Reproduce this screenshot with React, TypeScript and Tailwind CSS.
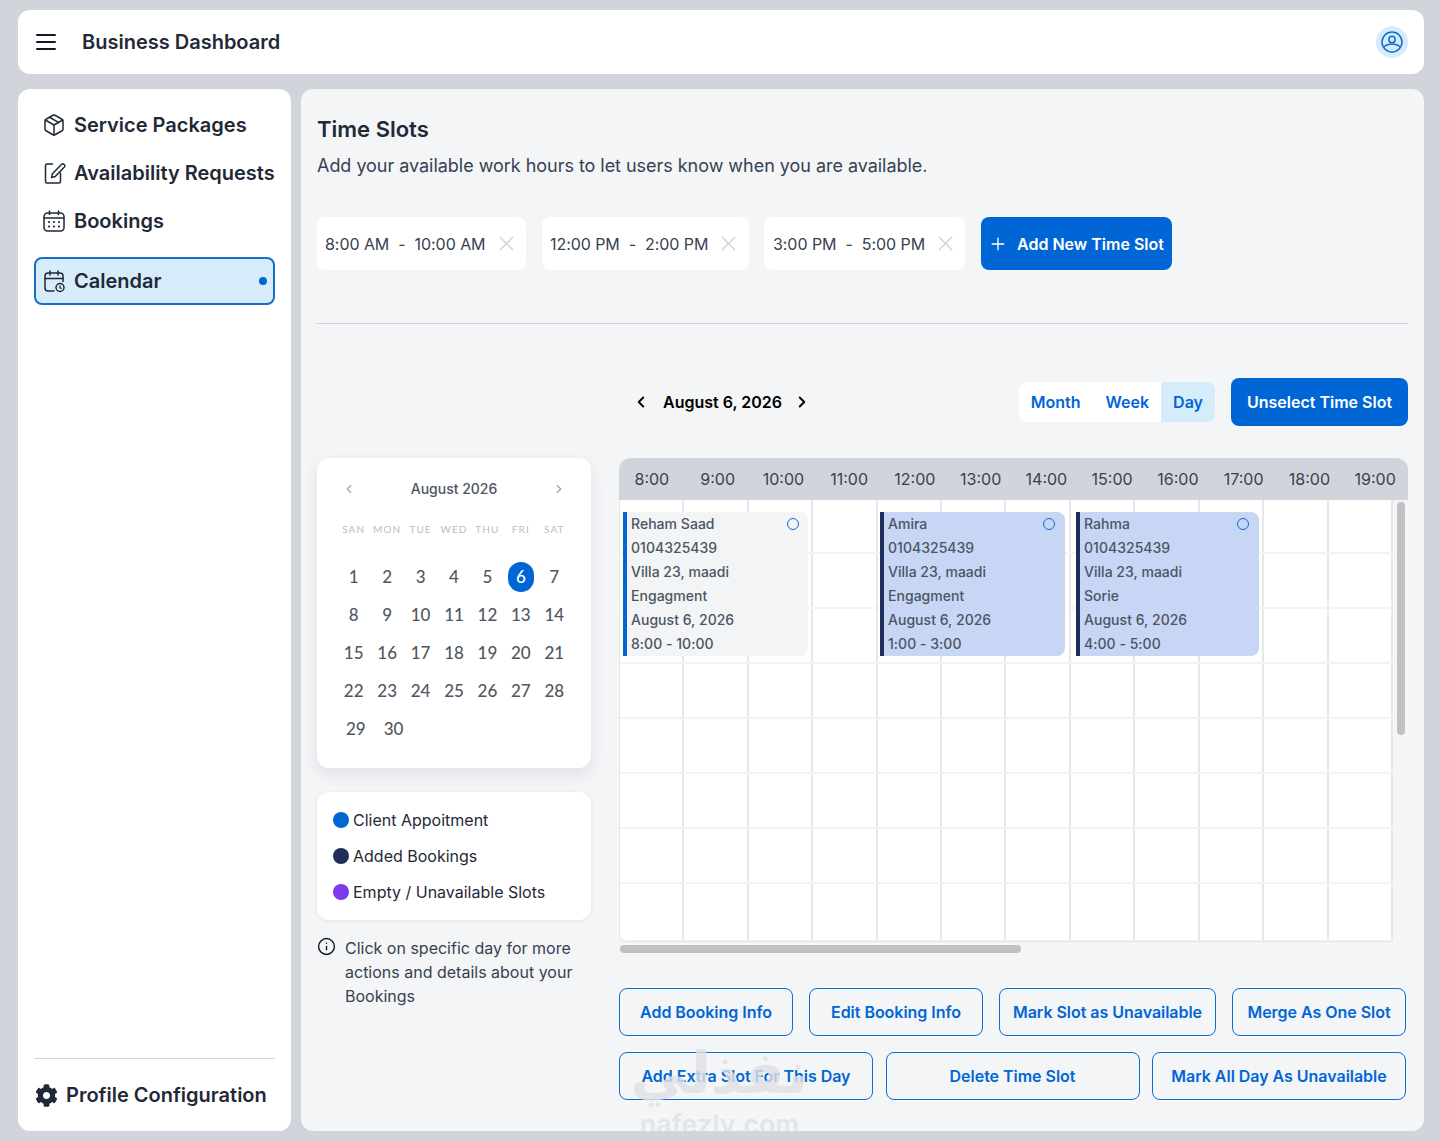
import React from "react";
import { Package, Plus, X, ChevronLeft, ChevronRight, Info } from "lucide-react";
import { FaCog } from "react-icons/fa";

const Inter = "[font-family:Inter,'Noto_Sans',sans-serif]";

function MenuIcon() {
  return (
    <svg width="20" height="16" viewBox="0 0 20 16" fill="none" stroke="#111827" strokeWidth="2" strokeLinecap="round" className="shrink-0">
      <path d="M1 1h18M1 8h18M1 15h18" />
    </svg>
  );
}

function PenIcon() {
  return (
    <svg width="24" height="24" viewBox="0 0 24 24" fill="none" stroke="currentColor" strokeWidth="1.500" strokeLinecap="round" strokeLinejoin="round" className="shrink-0">
      <path d="M10.500 3H5a1.500 1.500 0 0 0-1.500 1.500v16A1.500 1.500 0 0 0 5 22h12a1.500 1.500 0 0 0 1.500-1.500V12" />
      <path d="M9.500 16.500l.9-3.800 9-9.200a1.900 1.900 0 0 1 2.800 2.700l-9 9.300z" />
    </svg>
  );
}

function BookingsIcon() {
  return (
    <svg width="24" height="24" viewBox="0 0 24 24" fill="none" stroke="currentColor" strokeWidth="1.500" strokeLinecap="round" className="shrink-0">
      <rect x="2" y="4" width="20" height="18" rx="3.500" />
      <path d="M2 9h20M7.500 2v3.500M16.500 2v3.500" />
      <path d="M7 13h.01M12 13h.01M17 13h.01M7 17.500h.01M12 17.500h.01M17 17.500h.01" strokeWidth="2.200" />
    </svg>
  );
}

function CalendarClockIcon() {
  return (
    <svg width="24" height="24" viewBox="0 0 24 24" fill="none" stroke="currentColor" strokeWidth="1.500" strokeLinecap="round" strokeLinejoin="round" className="shrink-0">
      <path d="M21 12.500V7a3 3 0 0 0-3-3H6a3 3 0 0 0-3 3v12a3 3 0 0 0 3 3h6" />
      <path d="M3 9.500h18M8 2v4M16 2v4" />
      <circle cx="18" cy="18.500" r="4" />
      <path d="M18 16.800v1.900l1.200.7" strokeWidth="1.200" />
    </svg>
  );
}

function UserIcon() {
  return (
    <svg width="24" height="24" viewBox="0 0 24 24" fill="none" stroke="#0f6cd0" strokeWidth="1.500">
      <circle cx="12" cy="12" r="10" />
      <circle cx="12" cy="9.500" r="3.200" />
      <path d="M4 17c2-2.200 4.700-3 8-3s6 .8 8 3" />
    </svg>
  );
}

function NavItem({ icon, label }: { icon: React.ReactNode; label: string }) {
  return (
    <div className="flex items-center h-12 pl-2 gap-2 text-[#1f2937]">
      <div className="w-6 flex justify-center shrink-0">{icon}</div>
      <span className="text-[20px] font-semibold whitespace-nowrap">{label}</span>
    </div>
  );
}

function Chip({ from, to, width }: { from: string; to: string; width: string }) {
  return (
    <div className={`h-[53px] bg-white rounded-lg flex items-center pl-2 text-[16px] tracking-[-0.06px] text-[#374151] ${width}`}>
      <span className="whitespace-pre">{from}</span>
      <span className="mx-[9px]">-</span>
      <span className="whitespace-pre">{to}</span>
      <X size={25} strokeWidth={1.2} className="text-[#cdd0d5] ml-[8px]" />
    </div>
  );
}

const days = ["SAN", "MON", "TUE", "WED", "THU", "FRI", "SAT"];
const weeks = [
  [1, 2, 3, 4, 5, 6, 7],
  [8, 9, 10, 11, 12, 13, 14],
  [15, 16, 17, 18, 19, 20, 21],
  [22, 23, 24, 25, 26, 27, 28],
];

function MiniCalendar() {
  return (
    <div className="h-[310px] bg-white rounded-xl shadow-[0_6px_16px_rgba(17,24,39,0.09)] px-[20px] pt-[21px]">
      <div className="flex items-center justify-between h-[18px] px-[5px]">
        <ChevronLeft size={14} className="text-[#9ca3af] mt-[2px]" />
        <span className="text-[14px] font-medium text-[#4b5563]">August 2026</span>
        <ChevronRight size={14} className="text-[#9ca3af] mt-[2px]" />
      </div>
      <div className="grid grid-cols-7 w-[234px] mt-[25px] [font-family:Lato,sans-serif] text-[10px] tracking-[1.100px] text-[#b9bdc4] text-center leading-[14px]">
        {days.map((d) => (
          <span key={d}>{d}</span>
        ))}
      </div>
      <div className="mt-[22px] w-[234px] [font-family:Lato,sans-serif] text-[17px] font-medium text-[#52575f]">
        {weeks.map((w, i) => (
          <div key={i} className="grid grid-cols-7 h-[38px] items-center text-center">
            {w.map((d) => (
              <div key={d} className="flex justify-center">
                {d === 6 ? (
                  <span className="w-[26px] h-[30px] rounded-full bg-[#0066d6] text-white flex items-center justify-center">6</span>
                ) : (
                  <span>{d}</span>
                )}
              </div>
            ))}
          </div>
        ))}
        <div className="flex h-[38px] items-center pl-[9px] gap-[18px]">
          <span>29</span>
          <span>30</span>
        </div>
      </div>
    </div>
  );
}

function Legend() {
  const items = [
    ["bg-[#0066d6]", "Client Appoitment"],
    ["bg-[#1e2f5a]", "Added Bookings"],
    ["bg-[#7c3aed]", "Empty / Unavailable Slots"],
  ];
  return (
    <div className="mt-[24px] h-[128px] bg-white rounded-xl shadow-[0_1px_4px_rgba(17,24,39,0.08)] px-4 py-[10px]">
      {items.map(([c, t]) => (
        <div key={t} className="h-9 flex items-center gap-1 text-[16px] text-[#1f2937]">
          <span className={`w-4 h-4 rounded-full ${c}`} />
          <span>{t}</span>
        </div>
      ))}
    </div>
  );
}

const hours = ["8:00", "9:00", "10:00", "11:00", "12:00", "13:00", "14:00", "15:00", "16:00", "17:00", "18:00", "19:00"];
const rows = [54, 55, 55, 55, 55, 55, 55, 58];

function EventCard({
  name,
  kind,
  time,
  pos,
  light,
}: {
  name: string;
  kind: string;
  time: string;
  pos: string;
  light?: boolean;
}) {
  return (
    <div
      className={`absolute top-[12px] h-[144px] rounded-r-lg border-l-4 pl-1 text-[14px] leading-[24px] font-medium tracking-[0.03px] text-[#4b5563] ${pos} ${
        light ? "bg-[#f3f4f6] border-[#0066d6]" : "bg-[#c7d6f5] border-[#1e2f5a]"
      }`}
    >
      <div>{name}</div>
      <div>0104325439</div>
      <div>Villa 23, maadi</div>
      <div>{kind}</div>
      <div>August 6, 2026</div>
      <div>{time}</div>
      <span className={`absolute top-[6px] w-3 h-3 rounded-full border border-[#0f6cd0] ${light ? "right-[9px]" : "right-[10px]"}`} />
    </div>
  );
}

function Schedule() {
  return (
    <div>
      <div className="h-[42px] bg-[#d1d5db] rounded-t-xl grid grid-cols-12 items-center text-center text-[16px] text-[#374151]">
        {hours.map((h) => (
          <span key={h}>{h}</span>
        ))}
      </div>
      <div className="flex h-[442px]">
        <div className="relative w-[774px] bg-white rounded-bl-lg overflow-hidden border-l border-b border-[#e5e7eb]">
          {rows.map((r, i) => (
            <div key={i} className="grid grid-cols-12 border-b-2 border-[#f3f4f6]" style={{ height: r }}>
              {hours.map((h) => (
                <div key={h} className="border-r-2 border-[#e5e7eb]" />
              ))}
            </div>
          ))}
          <EventCard light name="Reham Saad" kind="Engagment" time="8:00 - 10:00" pos="left-[3px] w-[185px]" />
          <EventCard name="Amira" kind="Engagment" time="1:00 - 3:00" pos="left-[260px] w-[185px]" />
          <EventCard name="Rahma" kind="Sorie" time="4:00 - 5:00" pos="left-[456px] w-[183px]" />
        </div>
        <div className="w-[15px] pl-[4px] pt-[2px]">
          <div className="w-[8px] h-[233px] rounded-full bg-[#c1c1c1]" />
        </div>
      </div>
      <div className="h-[12px] pt-[3px] pl-[1px]">
        <div className="w-[401px] h-[8px] rounded-full bg-[#c1c1c1]" />
      </div>
    </div>
  );
}

function OutlineBtn({ label, w }: { label: string; w: string }) {
  return (
    <button className={`h-12 rounded-lg border border-[#0f6cd0] text-[#0066d6] text-[16px] font-semibold whitespace-nowrap tracking-[-0.03px] ${w}`}>
      {label}
    </button>
  );
}

export default function App() {
  return (
    <div className={`h-screen bg-[#d1d5db] pt-[10px] pb-[10px] pl-[18px] pr-[16px] flex flex-col gap-[15px] overflow-hidden ${Inter}`}>
      <header className="h-[64px] shrink-0 bg-white rounded-xl flex items-center pl-[18px] pr-[16px]">
        <MenuIcon />
        <h1 className="ml-[26px] text-[20px] font-semibold text-[#1f2937]">Business Dashboard</h1>
        <div className="ml-auto w-8 h-8 rounded-full bg-[#d6ecfb] flex items-center justify-center">
          <UserIcon />
        </div>
      </header>

      <div className="flex-1 flex gap-[10px] min-h-0">
        <aside className="w-[273px] bg-white rounded-xl px-4 pt-[12px] pb-[12px] flex flex-col">
          <NavItem icon={<Package size={24} strokeWidth={1.5} />} label="Service Packages" />
          <NavItem icon={<PenIcon />} label="Availability Requests" />
          <NavItem icon={<BookingsIcon />} label="Bookings" />
          <div className="mt-3 h-12 rounded-lg border-2 border-[#1a6fc4] bg-[#d6ecfb] flex items-center pl-[6px] gap-2 pr-[6px] text-[#1f2937]">
            <CalendarClockIcon />
            <span className="text-[20px] font-semibold">Calendar</span>
            <span className="ml-auto w-2 h-2 rounded-full bg-[#0066d6]" />
          </div>
          <div className="mt-auto border-t border-[#d1d5db] pt-[24px] h-[61px] flex items-start gap-[8px] pl-[1px]">
            <FaCog size={23} className="text-[#1f2937] mt-[1px]" />
            <span className="text-[20px] font-semibold text-[#1f2937] whitespace-nowrap leading-[24px]">Profile Configuration</span>
          </div>
        </aside>

        <main className="relative flex-1 bg-[#f3f5f7] rounded-xl pl-4 pr-4 pt-6 overflow-hidden">
          <h2 className="text-[22px] font-semibold text-[#1f2937] leading-8">Time Slots</h2>
          <p className="mt-[7px] text-[18px] tracking-[-0.035px] text-[#374151] leading-7">Add your available work hours to let users know when you are available.</p>

          <div className="mt-[37px] flex">
            <Chip from="8:00 AM" to="10:00 AM" width="w-[209px]" />
            <div className="w-4" />
            <Chip from="12:00 PM" to="2:00 PM" width="w-[207px]" />
            <div className="w-[15px]" />
            <Chip from="3:00 PM" to="5:00 PM" width="w-[201px] pl-[9px]" />
            <button className="ml-4 w-[191px] h-[53px] rounded-lg bg-[#0066d6] text-white flex items-center pl-[7px] gap-[9px] text-[16px] font-semibold whitespace-nowrap">
              <Plus size={20} strokeWidth={1.6} />
              Add New Time Slot
            </button>
          </div>

          <div className="mt-[53px] border-t border-[#d1d5db]" />

          <div className="mt-[54px] h-12 flex items-center">
            <div className="ml-[315px] flex items-center text-black">
              <ChevronLeft size={18} strokeWidth={2.5} />
              <span className="ml-[13px] mr-[11px] text-[16px] font-semibold">August 6, 2026</span>
              <ChevronRight size={18} strokeWidth={2.5} />
            </div>
            <div className="ml-auto h-10 bg-white rounded-lg flex text-[16px] font-semibold text-[#0066d6]">
              <span className="pl-[12px] pr-[13px] flex items-center">Month</span>
              <span className="pl-[12px] pr-[12px] flex items-center">Week</span>
              <span className="pl-[12px] pr-[12px] flex items-center bg-[#d6ecfb] rounded-r-lg">Day</span>
            </div>
            <button className="ml-4 w-[177px] h-12 rounded-lg bg-[#0066d6] text-white text-[16px] font-semibold">Unselect Time Slot</button>
          </div>

          <div className="mt-[32px] flex">
            <div className="w-[274px] shrink-0">
              <MiniCalendar />
              <Legend />
              <div className="mt-[16px] flex gap-[9px] text-[16px] leading-6 text-[#374151]">
                <Info size={19} strokeWidth={1.8} className="text-[#111827] mt-[1px] shrink-0" />
                <p className="w-[235px]">Click on specific day for more actions and details about your Bookings</p>
              </div>
            </div>
            <div className="ml-[28px] flex-1 min-w-0">
              <Schedule />
              <div className="mt-[34px] flex gap-[16px]">
                <OutlineBtn label="Add Booking Info" w="w-[174px]" />
                <OutlineBtn label="Edit Booking Info" w="w-[174px]" />
                <OutlineBtn label="Mark Slot as Unavailable" w="w-[217px]" />
                <OutlineBtn label="Merge As One Slot" w="w-[174px]" />
              </div>
              <div className="mt-4 w-[787px] grid grid-cols-3 gap-[12.500px]">
                <OutlineBtn label="Add Extra Slot For This Day" w="w-full" />
                <OutlineBtn label="Delete Time Slot" w="w-full" />
                <OutlineBtn label="Mark All Day As Unavailable" w="w-full" />
              </div>
            </div>
          </div>

          <div className="absolute left-[332px] top-[955px] w-[175px] pointer-events-none text-[#dfe1e5] opacity-80 leading-none">
            <div className="text-[58px] h-[63px] text-center font-bold [font-family:'DejaVu_Sans',sans-serif]" dir="rtl" lang="ar">نفذلي</div>
            <div className="mt-[5px] pl-[7px] text-[26px] font-semibold tracking-[0.5px]">nafezly.com</div>
          </div>
        </main>
      </div>
    </div>
  );
}
